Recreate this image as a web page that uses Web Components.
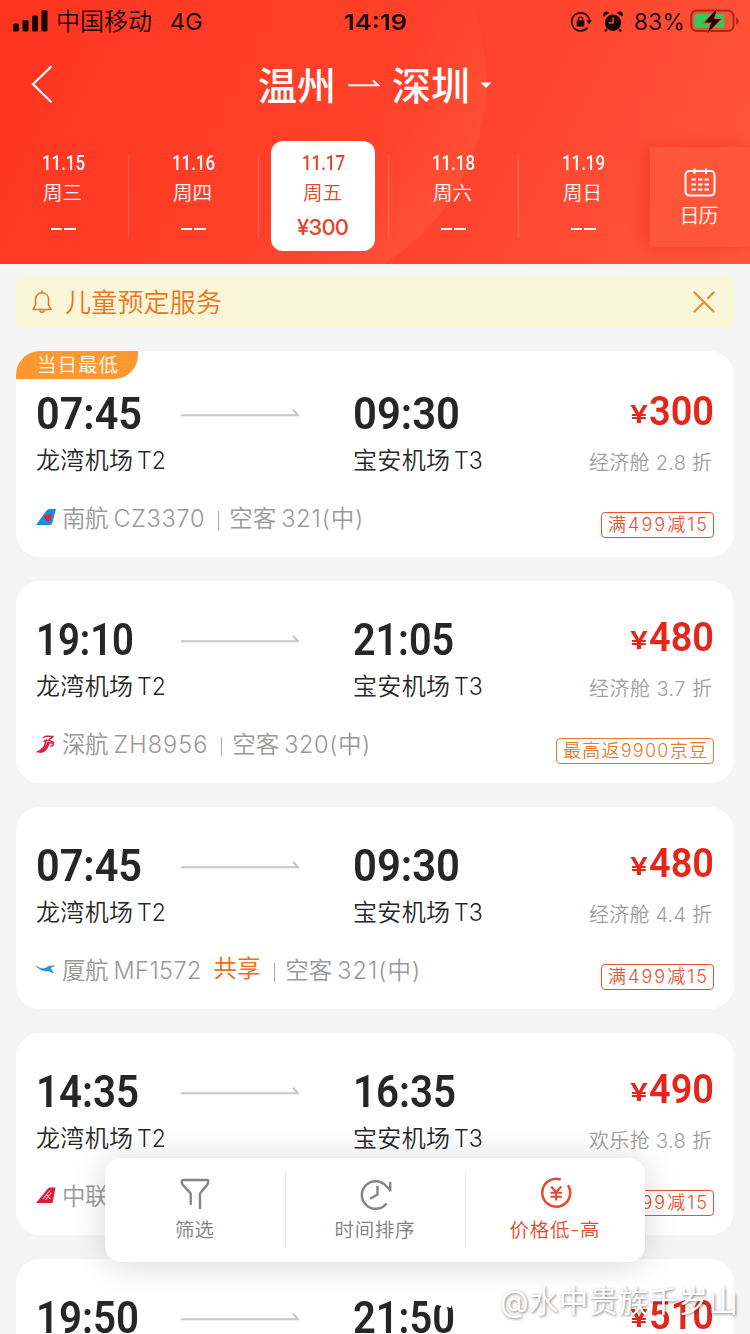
<!DOCTYPE html>
<html lang="zh-CN">
<head>
<meta charset="utf-8">
<title>温州 - 深圳</title>
<style>
html,body{margin:0;padding:0;height:1334px;overflow:hidden;background:#f5f5f5}
body{font-family:Inter,"Noto Sans CJK SC",sans-serif;color:#262626}
</style>
</head>
<body>
<flight-page></flight-page>
<script>
const sheet = (el, html) => { el.attachShadow({mode:'open'}).innerHTML = html; };

/* Text set to an exact measure: by tracking, or by width when "squeeze" is set. */
customElements.define('fit-text', class extends HTMLElement {
  connectedCallback(){
    if(this.shadowRoot) return;
    sheet(this, `<style>:host{display:block;white-space:nowrap;flex:none}
      span{display:inline-block;transform-origin:0 50%;white-space:pre}</style><span><slot></slot></span>`);
    const w = +this.getAttribute('w'), s = this.shadowRoot.querySelector('span');
    this.style.width = w + 'px';
    const nat = s.getBoundingClientRect().width;
    if(this.hasAttribute('squeeze')) s.style.transform = `scaleX(${w/nat})`;
    else {
      const n = [...this.textContent].length;
      s.style.letterSpacing = (w-nat)/Math.max(1,n-1) + 'px';
    }
  }
});

customElements.define('status-bar', class extends HTMLElement {
  connectedCallback(){ sheet(this, `<style>
    :host{display:grid;grid-template-columns:1fr auto 1fr;align-items:center;height:42px;color:#160604;font-size:23px;line-height:42px}
    .l,.r{display:flex;align-items:center}.r{justify-content:flex-end}
    svg{display:block;flex:none}
    fit-text{padding-top:1px}
    </style>
    <div class="l">
      <svg style="margin-left:13px" width="36" height="24" viewBox="0 0 36 24" fill="#160604"><rect x="0" y="13.5" width="6" height="8" rx="1.6"/><rect x="9.5" y="10" width="6" height="11.5" rx="1.6"/><rect x="19" y="5.5" width="6" height="16" rx="1.6"/><rect x="28.5" y="0" width="6" height="21.5" rx="1.6"/></svg>
      <fit-text w="96" style="margin-left:7px;font-size:24px;font-weight:350">中国移动</fit-text>
      <fit-text w="33" squeeze style="margin-left:18px">4G</fit-text>
    </div>
    <fit-text w="63" squeeze style="font-weight:600;font-size:22px">14:19</fit-text>
    <div class="r">
      <svg width="22" height="22" viewBox="0 0 22 22" fill="none" stroke="#160604" stroke-width="1.7"><path d="M17.6 16.6A9 9 0 1 1 19.6 9.5"/><path d="M16.3 9.2h5.6l-2.8 4.2z" fill="#160604" stroke="none"/><rect x="6.7" y="9.5" width="7.6" height="6" rx=".8" fill="#160604" stroke="none"/><path d="M8.4 10V8.2a2.1 2.1 0 0 1 4.2 0V10" stroke-width="1.4"/></svg>
      <svg style="margin-left:10px" width="22" height="22" viewBox="0 0 22 22"><circle cx="11" cy="11.8" r="8.2" fill="#160604"/><path d="M5 18.2l-2.2 2.4M17 18.2l2.2 2.4" stroke="#160604" stroke-width="2"/><path d="M1.8 5.6a3.2 3.2 0 0 1 5.4-3.6zM20.2 5.6a3.2 3.2 0 0 0-5.4-3.6z" fill="#160604"/><path d="M11 6.6v5.3H6.6" fill="none" stroke="#f7442d" stroke-width="1.5"/></svg>
      <fit-text w="51" squeeze style="margin-left:10px">83%</fit-text>
      <svg style="margin:-2px 11px 0 5px" width="49" height="26" viewBox="0 0 49 26"><rect x="1.2" y="2.6" width="42.4" height="20.4" rx="5.6" fill="none" stroke="#a42a1b" stroke-width="2"/><path d="M46 9.4c3.4 1 3.4 6 0 7z" fill="#a42a1b"/><rect x="4.4" y="5.8" width="30" height="14" rx="2.6" fill="#34c759"/><path d="M26.8.8L14.6 14.6h6.8L17.6 25 30.8 11h-7z" fill="#160604" stroke="#f7442d" stroke-width="1.6" paint-order="stroke"/></svg>
    </div>`); }
});

customElements.define('route-title', class extends HTMLElement {
  connectedCallback(){ sheet(this, `<style>
    :host{display:flex;align-items:center;height:86px;color:#fff;font-size:39px;font-weight:500;line-height:60px}
    svg{display:block;flex:none}
    fit-text{padding-top:2px}
    </style>
    <svg style="margin-left:31px" width="22" height="40" viewBox="0 0 22 40" fill="none" stroke="#fff" stroke-width="2.1"><path d="M20.5 1.2L2 19.200l18.5 18"/></svg>
    <fit-text w="78" style="margin-left:205px">${this.getAttribute('from')}</fit-text>
    <svg style="margin-left:12px" width="32" height="14" viewBox="0 0 32 14" fill="none" stroke="#fff" stroke-width="2"><path d="M.5 7.200H30.2L25 2.400"/></svg>
    <fit-text w="78" style="margin-left:12px">${this.getAttribute('to')}</fit-text>
    <svg style="margin-left:10px" width="12" height="8" viewBox="0 0 12 8"><path d="M.6 1.4h10.8L6 6.9z" fill="#fff"/></svg>`); }
});

customElements.define('day-cell', class extends HTMLElement {
  connectedCallback(){
    const p = this.getAttribute('price');
    sheet(this, `<style>
    :host{display:flex;flex:0 0 130px;height:110px;justify-content:center;position:relative;color:#fff}
    .box{display:flex;flex-direction:column;align-items:center;width:104px;box-sizing:border-box;padding-top:8px;border-radius:12px}
    :host([price]) .box{background:#fff;color:#e3452d}
    .d{font:500 20px/28px Roboto,sans-serif}
    .w{font-size:19.5px;font-weight:350;line-height:30px;margin:1px 1px 0 0}
    .p{font-size:22px;font-weight:500;line-height:30px;margin-top:4px}
    .dash{display:flex;gap:2px;margin-top:20px}.dash i{width:11.5px;height:2.4px;background:#fff}
    .sep{position:absolute;right:-1px;top:14px;width:1px;height:83px;background:rgba(255,255,255,.18)}
    :host([last]) .sep{display:none}
    </style>
    <div class="box"><fit-text class="d" squeeze w="43">${this.getAttribute('date')}</fit-text>
    <fit-text class="w" w="39">${this.getAttribute('week')}</fit-text>
    ${p?`<fit-text class="p" w="52">${p}</fit-text>`:`<div class="dash"><i></i><i></i></div>`}</div><div class="sep"></div>`); }
});

customElements.define('date-strip', class extends HTMLElement {
  connectedCallback(){ sheet(this, `<style>
    :host{display:flex;height:110px;padding-top:13px;margin-left:-2px}
    .cal{flex:1;height:100px;margin:6px 0 0 2px;background:#ff5538;box-shadow:-3px 0 16px rgba(222,30,10,.4);display:flex;flex-direction:column;align-items:center;color:#fff}
    .cal fit-text{font-size:20px;font-weight:350;line-height:30px;margin:4px 2px 0 0}
    .cal svg{display:block;margin-top:21px}
    </style>
    <day-cell date="11.15" week="周三"></day-cell><day-cell date="11.16" week="周四"></day-cell>
    <day-cell date="11.17" week="周五" price="¥300"></day-cell><day-cell date="11.18" week="周六"></day-cell>
    <day-cell date="11.19" week="周日" last></day-cell>
    <div class="cal"><svg width="32" height="29" viewBox="0 0 32 29" fill="none" stroke="#fff" stroke-width="2"><rect x="1.5" y="3" width="29" height="24.6" rx="4"/><path d="M10.5.5v5.4M22 .5v5.4" /><path d="M7.5 11.5h4.500M14 11.5h4.500M20.5 11.5h4.500M7.5 16.5h4.500M14 16.5h4.500M20.5 16.5h4.500M7.5 21.5h4.500M14 21.5h4.500M20.5 21.5h4.500"/></svg><fit-text w="39">日历</fit-text></div>`); }
});

customElements.define('app-header', class extends HTMLElement {
  connectedCallback(){ sheet(this, `<style>
    :host{display:block;height:264px;overflow:hidden;position:relative;z-index:0;background:
      linear-gradient(118deg,#ff341f 0%,#ff4029 40%,#ff442e 65%,#ff593c 100%)}
    .arc{position:absolute;z-index:-1;inset:0;background:radial-gradient(circle at 270px 80px,rgba(255,110,70,0) 100px,rgba(255,110,70,.3) 215.5px,transparent 217px);
      -webkit-mask-image:linear-gradient(130deg,transparent 45%,#000 62%)}
    </style><div class="arc"></div><status-bar></status-bar><route-title from="温州" to="深圳"></route-title><date-strip></date-strip>`); }
});

customElements.define('notice-bar', class extends HTMLElement {
  connectedCallback(){ sheet(this, `<style>
    :host{display:flex;align-items:center;box-sizing:border-box;height:52px;margin:12px 16px 0;padding:0 18px 0 16px;border-radius:8px;background:#faf7d9;color:#f0721c;font-size:26px;font-weight:350;line-height:52px}
    svg{display:block;flex:none} .x{margin-left:auto}
    fit-text{padding-top:1px}
    </style>
    <svg width="20" height="24" viewBox="0 0 20 24" fill="none" stroke="#f0721c" stroke-width="1.5" stroke-linejoin="round"><path d="M3.5 15V9.5C3.5 5.5 6 2.8 10 2.8s6.500 2.700 6.500 6.700V15l2.500 4.600H1z"/><path d="M10 .5v2.200M7.600 20.500c.5 2.200 4.300 2.200 4.800 0"/></svg>
    <fit-text w="157" style="margin-left:13px">儿童预定服务</fit-text>
    <svg class="x" width="24" height="22" viewBox="0 0 24 22" fill="none" stroke="#f18a3c" stroke-width="2.3" stroke-linecap="round"><path d="M2.500 1.500l19 19M2.500 20.500L12.200 11M16 7.200l5.500-5.700"/></svg>`); }
});

const LOGOS = {
  cz:`<path d="M0 16L10.500 1.500Q11.500 0 13.500 0H20L16.500 13.500Q16 16 13.500 16z" fill="#1c8fd6"/><path d="M8.500 6.500l3-1.500 1.800 1 2.700-1-.6 4-1.600 3.800-3.600-.8-1.500-3z" fill="#e0234c"/>`,
  zh:`<path d="M7.500 2.500C10 0 13 2 17.500 1.200L13 4.800M8 6.500C10.500 3.500 14 5.500 17.500 7.500M1.200 17C5.500 15.500 9 12 10 6.500M3.800 17.500C8.500 15.500 11 11 12 7M6.500 17C10.500 15 12 12 13.300 7.500l3.400.6c1.500 1.500 0 3.300-2 2.900" fill="none" stroke="#d5213f" stroke-width="1.500" stroke-linecap="round"/>`,
  mf:`<path d="M0 5c4 2.500 7 3 10 2 2-2 5-2.500 9-2-2.500.4-4 1.200-4.500 2.400 1 1 2 2.300 3 4.800-3-1.800-5-2.300-8-2.200C5.500 9.800 2 7.500 0 5z" fill="#2492d8" stroke="#2492d8" stroke-width=".4"/>`,
  kn:`<path d="M0 16L11.500 2Q12.500 .5 14 .5h5.500L16.500 16z" fill="#e31b3b"/><path d="M7 12l7-8.500M9.500 13l6-7.500M10 7l4.500 5" stroke="#f9b8c2" stroke-width="1.100" fill="none"/>`
};

customElements.define('flight-card', class extends HTMLElement {
  connectedCallback(){
    const g = k => this.getAttribute(k);
    sheet(this, `<style>
    :host{display:flex;justify-content:space-between;position:relative;box-sizing:border-box;height:202px;margin:24px 16px 0;padding:34px 20px 0 20px;border-radius:24px;background:#fff;flex:none}
    :host([lowest]){height:206px;padding-top:38px;margin-top:23px}
    .row{display:flex}
    .time{font:600 45px/50px Roboto,sans-serif}
    .ap{font-size:24px;font-weight:350;line-height:40px;margin-top:2px}
    .col1{width:145px}.col2{width:172px}
    .arrow{margin-top:19px;display:block}
    .fl{display:flex;align-items:center;height:40px;margin-top:18px;color:#999;font-size:23.5px;font-weight:350;line-height:40px}
    .fl svg{flex:none;margin-right:6px}
    .bar{width:1.700px;height:19px;background:#a8a8a8;margin:3px 10px 0 13px}
    .share{color:#ee6f14;font-weight:400;margin:-5px 0 0 12px}
    .right{display:flex;flex-direction:column;align-items:flex-end}
    .price{display:flex;color:#e6261a;font:600 41px/50px Roboto,sans-serif;margin-top:-3px}
    .price .y{font:600 24px/50px Inter,sans-serif;margin:4px 1px 0 0}
    .cabin{font-size:20px;font-weight:350;line-height:30px;margin-top:8px;color:#a0a0a0;margin-right:2px}
    .tag{box-sizing:border-box;height:26px;margin-top:34px;border:1.5px solid #e9512f;border-radius:4px;padding:0 6px;color:#e9512f;font-size:18px;font-weight:350;line-height:24px}
    .tag.o{border-color:#ea7a28;color:#ea7a28}
    .badge{position:absolute;left:0;top:0;width:122px;height:28px;box-sizing:border-box;padding-left:21px;background:#ff9831;border-radius:24px 0 24px 0;color:#fff;font-size:19.500px;font-weight:350;line-height:28px}
    </style>
    ${this.hasAttribute('lowest')?'<div class="badge"><fit-text w="81">当日最低</fit-text></div>':''}
    <div><div class="row"><div class="col1"><fit-text class="time" squeeze w="${g('w1')}">${g('dep')}</fit-text></div>
      <div class="col2"><svg class="arrow" width="118" height="12" viewBox="0 0 118 12" fill="none" stroke="#c6c6c6" stroke-width="2"><path d="M0 7.200H117L112 1.800"/></svg></div>
      <fit-text class="time" squeeze w="${g('w2')}">${g('arr')}</fit-text></div>
      <div class="row ap"><fit-text w="97">龙湾机场</fit-text><fit-text w="29" squeeze style="margin:0 187px 0 4px">T2</fit-text><fit-text w="97">宝安机场</fit-text><fit-text w="29" squeeze style="margin-left:4px">T3</fit-text></div>
      <div class="fl"><svg width="20" height="20" viewBox="0 0 20 20">${LOGOS[g('logo')]}</svg>
      <fit-text w="46.5">${g('air')}</fit-text><fit-text w="${g('cw')}" style="margin-left:5px">${g('code')}</fit-text>
      ${this.hasAttribute('shared')?'<fit-text class="share" w="47">共享</fit-text>':''}<span class="bar"></span>
      <fit-text w="47">空客</fit-text><fit-text w="${g('pw')}" style="margin-left:5px">${g('plane')}</fit-text></div></div>
    <div class="right"><div class="price"><fit-text class="y" squeeze w="18">¥</fit-text><fit-text squeeze w="65">${g('price')}</fit-text></div>
      <fit-text class="cabin" w="123">${g('cabin')}</fit-text>
      <div class="tag ${g('tone')||''}"><fit-text w="${g('tw')}">${g('tag')}</fit-text></div></div>`); }
});

customElements.define('sort-item', class extends HTMLElement {
  connectedCallback(){ sheet(this, `<style>
    :host{display:flex;flex:1;flex-direction:column;align-items:center;color:#808080;font-size:19.500px;font-weight:350;line-height:30px;position:relative}
    :host([active]){color:#e6492f}
    ::slotted(svg){display:block;margin-top:18px;margin-bottom:5px}
    i{position:absolute;right:-1px;top:14px;height:76px;width:1px;background:#e8e8e8}
    :host([active]) i{display:none}
    fit-text{margin-right:1px}
    </style><slot></slot><fit-text w="${this.getAttribute('w')}">${this.getAttribute('label')}</fit-text><i></i>`); }
});

customElements.define('sort-bar', class extends HTMLElement {
  connectedCallback(){ sheet(this, `<style>
    :host{position:absolute;left:105px;top:1158px;width:540px;height:104px;display:flex;background:#fff;border-radius:16px;box-shadow:0 2px 34px rgba(0,0,0,.16)}
    </style>
    <sort-item label="筛选" w="39"><svg width="34" height="34" viewBox="0 0 34 34" fill="none" stroke="#858585" stroke-width="2.400" stroke-linecap="round" stroke-linejoin="round"><path d="M12.700 28V17.500L4.600 8.600Q2.500 4 5 4H29q2.500 0 .4 4.600L22 17.500V32"/></svg></sort-item>
    <sort-item label="时间排序" w="80"><svg width="34" height="34" viewBox="0 0 34 34" fill="none" stroke="#858585" stroke-width="2.400"><path d="M28.500 27.500A13.800 13.800 0 1 1 28.500 10.500L32 14"/><path d="M32.200 6v9.500"/><path d="M19.500 10v8.500l-7.500 4.300"/></svg></sort-item>
    <sort-item label="价格低-高" w="90" active><svg width="34" height="34" viewBox="0 0 34 34" fill="none" stroke="#e6492f" stroke-width="2.500"><path d="M22.700 3.500A14 14 0 1 0 30 9.200"/><path d="M13.200 10.500l5 5.800 5-5.800M18.200 16v8.500M12.500 16.700h11.400M12.500 20.800h11.400" stroke-width="2.100"/></svg></sort-item>`); }
});

customElements.define('water-mark', class extends HTMLElement {
  connectedCallback(){ sheet(this, `<style>
    :host{position:absolute;left:425px;top:1279px;width:325px;height:44px;display:flex;color:#fff;font-size:29.500px;line-height:44px;text-shadow:1px 1px 3px rgba(0,0,0,.5)}
    svg{flex:none;display:block}
    </style><svg width="44" height="44" viewBox="0 0 44 44"><path d="M6 20q-4-2-4 1l0 6q6 1 10-1l14 3 2-9-6-3-3 3-3 0-3-3-3 4z" fill="#fff"/></svg>
    <fit-text w="238" style="margin-left:31px">@水中贵族千岁山</fit-text>`); }
});

customElements.define('flight-page', class extends HTMLElement {
  connectedCallback(){ sheet(this, `<style>
    :host{display:flex;flex-direction:column;position:relative;width:750px;height:1334px;overflow:hidden;background:#f5f5f5}
    app-header,notice-bar{flex:none}
    </style>
    <app-header></app-header><notice-bar></notice-bar>
    <flight-card lowest dep="07:45" w1="106" arr="09:30" w2="107" price="300" cabin="经济舱 2.8 折" logo="cz" air="南航" code="CZ3370" cw="91" plane="321(中)" pw="82" tag="满499减15" tw="99"></flight-card>
    <flight-card dep="19:10" w1="98" arr="21:05" w2="101" price="480" cabin="经济舱 3.7 折" logo="zh" air="深航" code="ZH8956" cw="94" plane="320(中)" pw="86" tag="最高返9900京豆" tw="144" tone="o"></flight-card>
    <flight-card dep="07:45" w1="106" arr="09:30" w2="107" price="480" cabin="经济舱 4.4 折" logo="mf" air="厦航" code="MF1572" cw="88" shared plane="321(中)" pw="83" tag="满499减15" tw="99"></flight-card>
    <flight-card dep="14:35" w1="103" arr="16:35" w2="103" price="490" cabin="欢乐抢 3.8 折" logo="kn" air="中联" code="KN5830" cw="91" plane="320(中)" pw="81" tag="满499减15" tw="99"></flight-card>
    <flight-card dep="19:50" w1="103" arr="21:50" w2="102" price="510" cabin="经济舱 4.7 折" logo="cz" air="南航" code="CZ3368" cw="91" plane="320(中)" pw="81" tag="满499减15" tw="99"></flight-card>
    <sort-bar></sort-bar><water-mark></water-mark>`); }
});
</script>
</body>
</html>
